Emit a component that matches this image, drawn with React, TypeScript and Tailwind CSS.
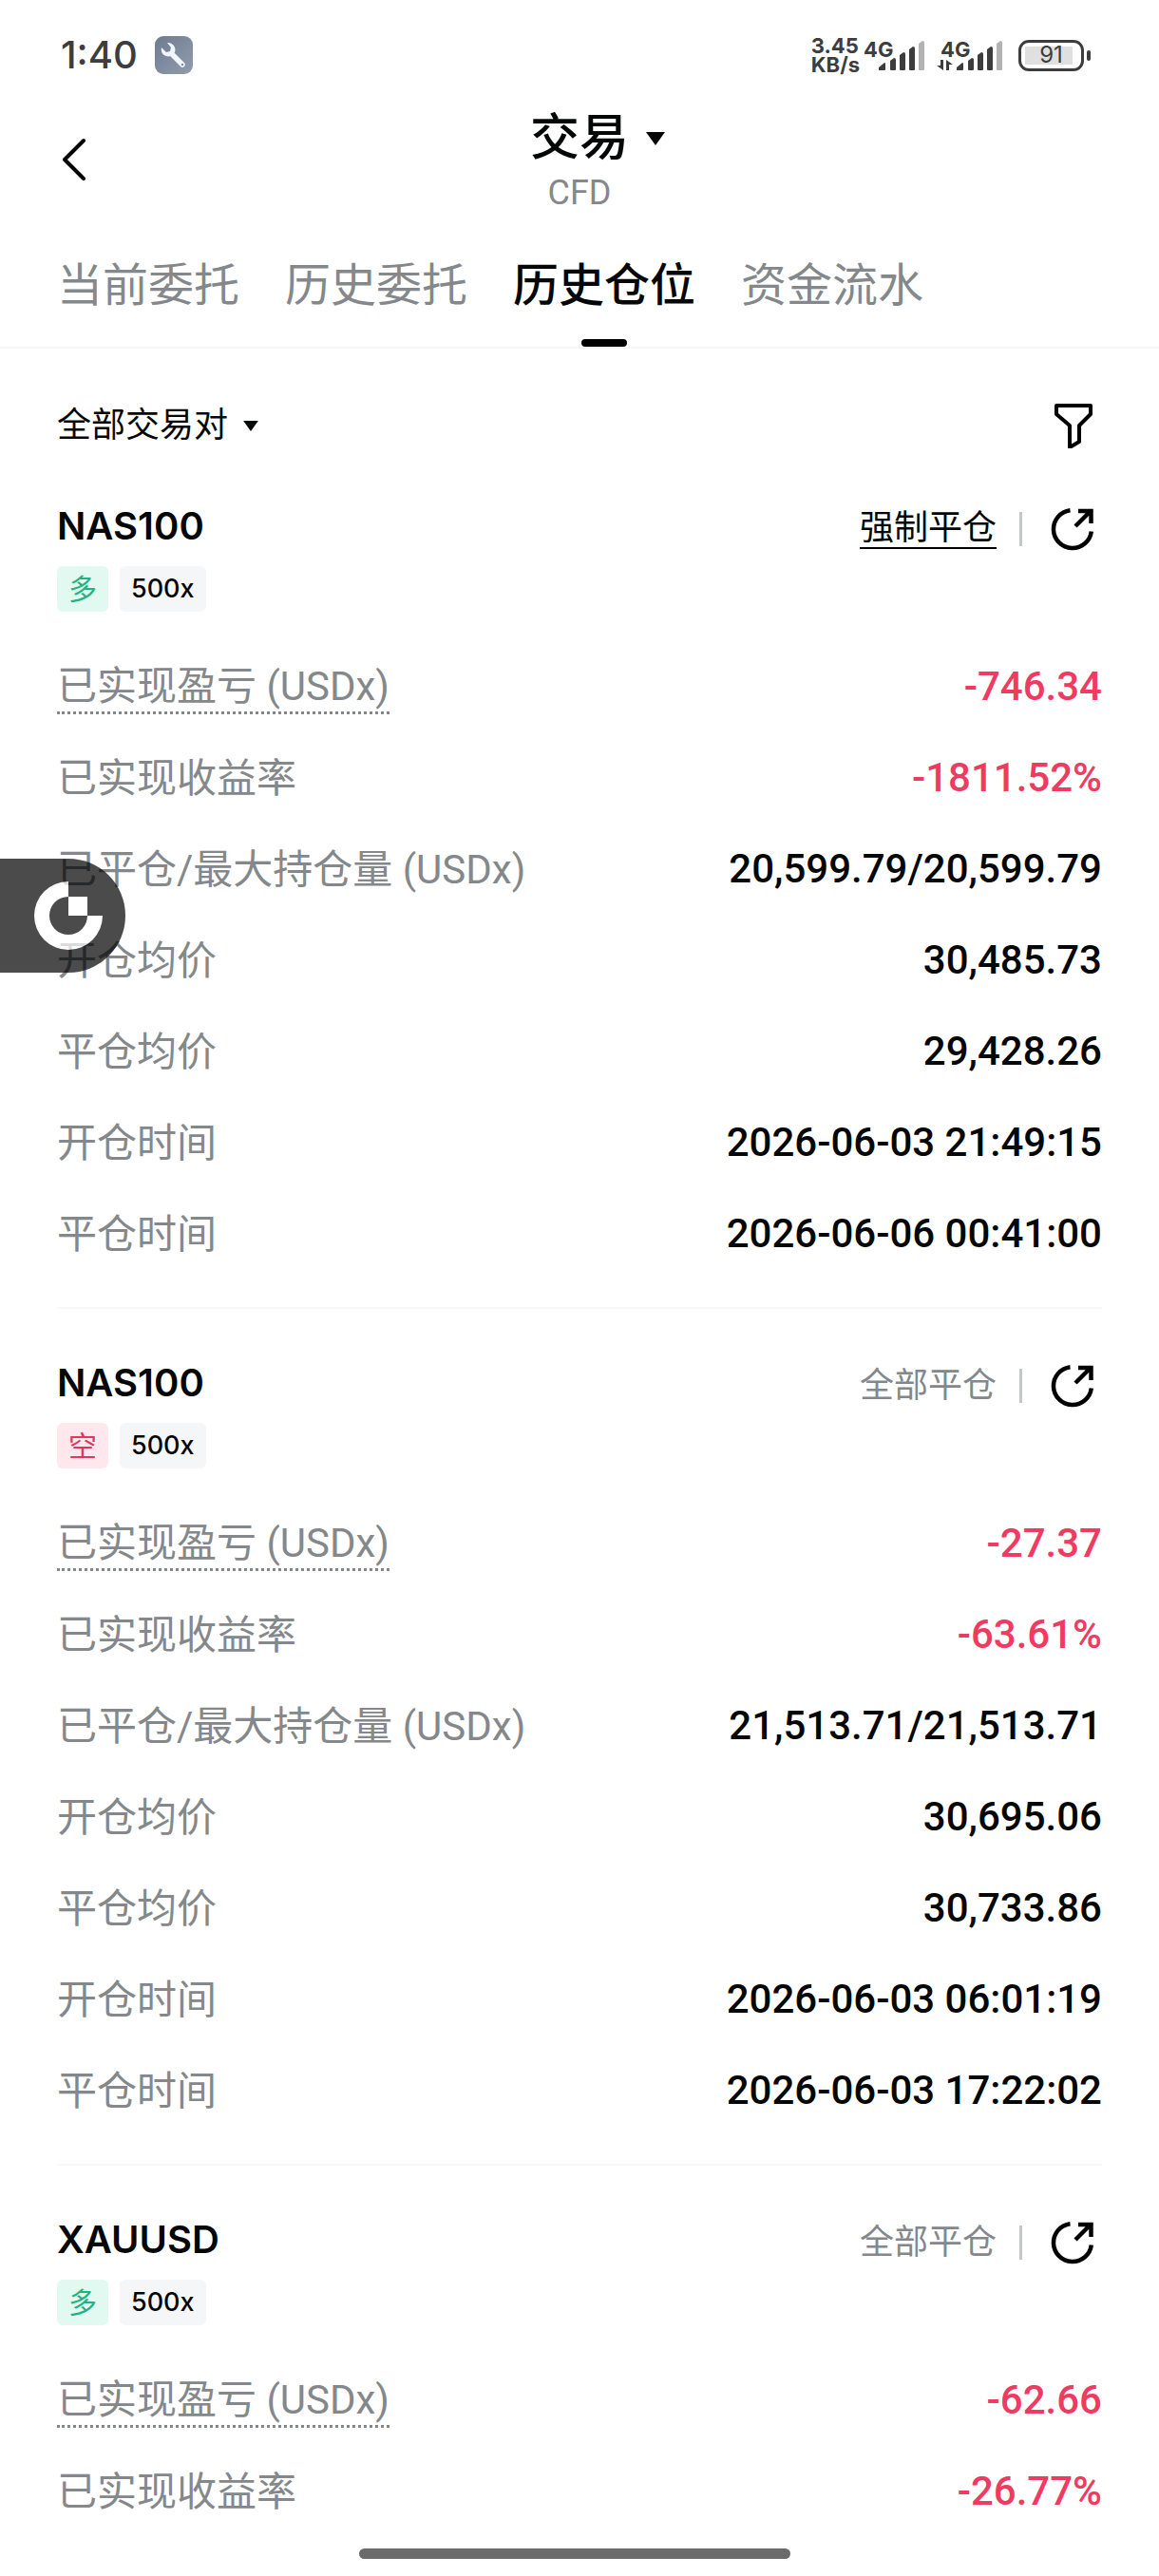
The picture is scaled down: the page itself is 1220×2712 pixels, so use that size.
import type { ReactNode } from "react";

interface Field {
    label: string;
    value: string;
    tone?: "loss";
    hint?: boolean;
}

interface Position {
    id: number;
    symbol: string;
    side: "long" | "short";
    leverage: string;
    status: string;
    forced?: boolean;
    fields: Field[];
}

const TABS = ["当前委托", "历史委托", "历史仓位", "资金流水"];
const ACTIVE_TAB = "历史仓位";

const POSITIONS: Position[] = [
    {
        id: 1,
        symbol: "NAS100",
        side: "long",
        leverage: "500x",
        status: "强制平仓",
        forced: true,
        fields: [
            { label: "已实现盈亏 (USDx)", value: "-746.34", tone: "loss", hint: true },
            { label: "已实现收益率", value: "-1811.52%", tone: "loss" },
            { label: "已平仓/最大持仓量 (USDx)", value: "20,599.79/20,599.79" },
            { label: "开仓均价", value: "30,485.73" },
            { label: "平仓均价", value: "29,428.26" },
            { label: "开仓时间", value: "2026-06-03 21:49:15" },
            { label: "平仓时间", value: "2026-06-06 00:41:00" },
        ],
    },
    {
        id: 2,
        symbol: "NAS100",
        side: "short",
        leverage: "500x",
        status: "全部平仓",
        fields: [
            { label: "已实现盈亏 (USDx)", value: "-27.37", tone: "loss", hint: true },
            { label: "已实现收益率", value: "-63.61%", tone: "loss" },
            { label: "已平仓/最大持仓量 (USDx)", value: "21,513.71/21,513.71" },
            { label: "开仓均价", value: "30,695.06" },
            { label: "平仓均价", value: "30,733.86" },
            { label: "开仓时间", value: "2026-06-03 06:01:19" },
            { label: "平仓时间", value: "2026-06-03 17:22:02" },
        ],
    },
    {
        id: 3,
        symbol: "XAUUSD",
        side: "long",
        leverage: "500x",
        status: "全部平仓",
        fields: [
            { label: "已实现盈亏 (USDx)", value: "-62.66", tone: "loss", hint: true },
            { label: "已实现收益率", value: "-26.77%", tone: "loss" },
        ],
    },
];

function Caret({ className }: { className: string }) {
    return (
        <svg viewBox="0 0 20 14" className={className} fill="currentColor" aria-hidden="true">
            <path d="M0 0h20L10 14z" />
        </svg>
    );
}

function SignalBars() {
    return (
        <svg viewBox="0 0 49 31" className="h-[31px] w-[49px] shrink-0" aria-hidden="true">
            <path d="M0 31v-3l6-5q1 0 1 1v6q0 1-1 1z" fill="#3d3d3d" />
            <path d="M12 30V21l4-3q2 0 2 2v10q0 1-1 1h-4q-1 0-1-1z" fill="#3d3d3d" />
            <path d="M22 30V15l4-3q2 0 2 2v16q0 1-1 1h-4q-1 0-1-1z" fill="#3d3d3d" />
            <path d="M32 30V9l4-3q2 0 2 2v22q0 1-1 1h-4q-1 0-1-1z" fill="#3d3d3d" />
            <path d="M42 30V3l4-3q2 0 2 2v28q0 1-1 1h-4q-1 0-1-1z" fill="#b3b3b3" />
        </svg>
    );
}

function StatusBar() {
    return (
        <div className="flex h-[116px] items-center justify-between pl-16 pr-[72px] font-[Inter,sans-serif] text-[#3d3d3d]">
            <div className="flex items-center gap-[18px]">
                <span className="text-[40px] font-medium leading-none">1:40</span>
                <svg viewBox="0 0 40 40" className="size-10" aria-hidden="true">
                    <defs>
                        <linearGradient id="tool" x1="0" y1="0" x2="1" y2="1">
                            <stop offset="0" stopColor="#6d7c90" />
                            <stop offset="1" stopColor="#929cae" />
                        </linearGradient>
                    </defs>
                    <rect width="40" height="40" rx="9" fill="url(#tool)" />
                    <path d="M18 19l11 11" stroke="#f1f6fd" strokeWidth="5.5" strokeLinecap="round" />
                    <path
                        d="M7 12c-1 4 1 8 5 9 2 1 4 0 5 0l4-4c0-1 1-3 0-5-1-3-4-5-8-5l4 5-1 4-4 1z"
                        fill="#f1f6fd"
                    />
                    <circle cx="29" cy="30" r="1.3" fill="#8793a6" />
                </svg>
            </div>
            <div className="flex items-center">
                <div className="flex flex-col text-[22px] font-bold leading-5">
                    <span>3.45</span>
                    <span>KB/s</span>
                </div>
                <div className="ml-1 flex items-end">
                    <span className="w-4 self-start text-[22px] font-bold leading-[19px]">4G</span>
                    <SignalBars />
                </div>
                <div className="ml-3 flex items-end">
                    <div className="flex w-[21px] flex-col self-start">
                        <span className="pl-1 text-[22px] font-bold leading-[19px]">4G</span>
                        <svg viewBox="0 0 17 11" className="mt-px h-[11px] w-[17px]" fill="currentColor" aria-hidden="true">
                            <path d="M4 0h3v11L0 6h4zM10 11V0l7 5h-4v6z" />
                        </svg>
                    </div>
                    <SignalBars />
                </div>
                <div className="ml-4 flex items-center gap-[3px]">
                    <div className="flex h-[33px] w-[69px] rounded-[11px] border-[3px] border-[#3d3d3d] p-1">
                        <span className="flex h-full w-full items-center justify-center bg-[linear-gradient(90deg,#e0e0e0_90%,transparent_90%)] text-[24px] leading-none">
                            91
                        </span>
                    </div>
                    <span className="h-[11px] w-1 rounded-full bg-[#3d3d3d]" />
                </div>
            </div>
        </div>
    );
}

function Header() {
    return (
        <header className="grid grid-cols-[1fr_auto_1fr] items-start px-[60px]">
            <button type="button" aria-label="返回" className="flex h-[104px] w-12 items-center">
                <svg viewBox="0 0 30 46" className="h-[46px] w-[30px]" fill="none" stroke="#000" strokeWidth="4" strokeLinecap="round" strokeLinejoin="round" aria-hidden="true">
                    <path d="M28 3L8 23l20 20" />
                </svg>
            </button>
            <button type="button" className="grid grid-cols-[40px_auto_40px] items-center">
                <span className="col-start-2 text-[52px] font-medium leading-[60px]">交易</span>
                <Caret className="ml-[18px] h-[14px] w-5" />
                <span className="col-start-2 text-[36px] leading-[54px] text-[#84888b]">CFD</span>
            </button>
        </header>
    );
}

function Tabs() {
    return (
        <nav className="mt-9 flex gap-12 border-b-2 border-[#f5f5f5] px-[60px]">
            {TABS.map((tab) => {
                const active = tab === ACTIVE_TAB;
                return (
                    <a key={tab} href="#" aria-current={active ? "page" : undefined} className="flex flex-col items-center">
                        <span className={active ? "text-[48px] font-medium leading-[70px]" : "text-[48px] leading-[70px] text-[#84888b]"}>
                            {tab}
                        </span>
                        <span className={active ? "mt-[21px] h-2 w-12 rounded-full bg-black" : "mt-[21px] h-2 w-12"} />
                    </a>
                );
            })}
        </nav>
    );
}

function FilterBar() {
    return (
        <div className="flex h-[162px] items-center justify-between pl-[60px] pr-[70px]">
            <button type="button" className="flex items-center gap-4 text-[36px]">
                全部交易对
                <Caret className="h-[11px] w-4" />
            </button>
            <button type="button" aria-label="筛选">
                <svg viewBox="0 0 40 48" className="h-12 w-10" fill="none" stroke="#000" strokeWidth="4" strokeLinejoin="round" aria-hidden="true">
                    <path d="M2 3h36v9L26 24v17l-10 6V24L2 12z" />
                </svg>
            </button>
        </div>
    );
}

function Tag({ className, children }: { className: string; children: ReactNode }) {
    return <span className={`flex h-12 items-center rounded-md px-3 ${className}`}>{children}</span>;
}

function FieldRow({ label, value, tone, hint }: Field) {
    return (
        <div className="flex h-24 items-center justify-between">
            <dt className="pt-1 text-[42px] leading-[52px] text-[#84888b]">
                <span className={hint ? "block border-b-3 border-dotted border-[#84888b]" : ""}>{label}</span>
            </dt>
            <dd className={`text-[42px] font-medium ${tone === "loss" ? "text-[#ef3a61]" : ""}`}>{value}</dd>
        </div>
    );
}

function PositionCard({ position }: { position: Position }) {
    const { symbol, side, leverage, status, forced, fields } = position;
    return (
        <article className="border-b-2 border-[#f8f8f8] pb-[30px] pt-[53px] first:pt-0 last:border-b-0">
            <div className="flex items-start justify-between">
                <h2 className="font-[Inter,sans-serif] text-[40px] font-semibold leading-[50px]">{symbol}</h2>
                <div className="flex h-14 items-center">
                    <span className={forced ? "border-b-2 border-black text-[36px] leading-10" : "text-[36px] leading-10 text-[#84888b]"}>
                        {status}
                    </span>
                    <span className="ml-6 h-9 w-[3px] bg-[#c4c7ca]" />
                    <button type="button" aria-label="分享" className="ml-[30px] mr-2">
                        <svg viewBox="0 0 46 46" className="size-[46px]" fill="none" stroke="#000" strokeWidth="4.5" aria-hidden="true">
                            <path d="M20.5 3.2A20 20 0 1 0 42.8 25.500M26 20L42 4M29 4h13.500v13" />
                        </svg>
                    </button>
                </div>
            </div>
            <div className="mt-[11px] flex gap-3">
                <Tag className={side === "long" ? "bg-[#e2f9f2] text-[30px] text-[#1fb481]" : "bg-[#fee8ed] text-[30px] text-[#e0365f]"}>
                    {side === "long" ? "多" : "空"}
                </Tag>
                <Tag className="bg-[#f5f6f8] font-[Inter,sans-serif] text-[27px] font-medium">{leverage}</Tag>
            </div>
            <dl className="mt-[30px]">
                {fields.map((field) => (
                    <FieldRow key={field.label} {...field} />
                ))}
            </dl>
        </article>
    );
}

function FloatingBadge() {
    return (
        <button type="button" aria-label="悬浮窗" className="absolute left-0 top-[904px] h-[120px] w-[132px] rounded-r-full bg-black opacity-70">
            <svg viewBox="0 0 72 72" className="ml-9 size-[72px]" fill="#fff" aria-hidden="true">
                <path d="M36 0a36 36 0 1 0 36 36H56a20 20 0 1 1-20-20z" />
                <path d="M36 16h20v20H36z" />
            </svg>
        </button>
    );
}

export default function App() {
    return (
        <div className="relative h-screen overflow-hidden bg-white font-[Roboto,'Noto_Sans_CJK_SC',sans-serif] text-[#050606]" lang="zh-CN">
            <StatusBar />
            <Header />
            <Tabs />
            <FilterBar />
            <main className="px-[60px]">
                {POSITIONS.map((position) => (
                    <PositionCard key={position.id} position={position} />
                ))}
            </main>
            <FloatingBadge />
            <div className="absolute bottom-[18px] left-[31%] h-[11px] w-[454px] rounded-full bg-[#6b6b6b]" />
        </div>
    );
}
